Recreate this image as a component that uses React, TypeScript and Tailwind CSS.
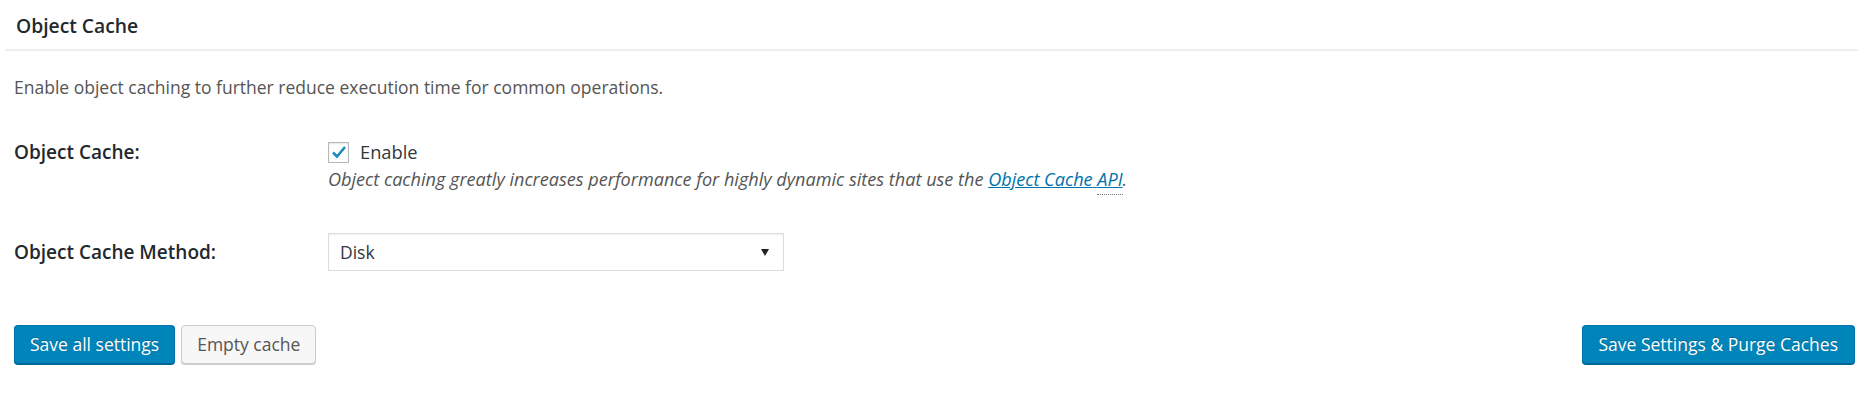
import React from 'react';

const font = { fontFamily: '"Open Sans", "Noto Sans", sans-serif' };

export default function App() {
  return (
    <div className="w-full h-[408px] bg-white text-[#23282d]" style={font}>
      {/* postbox header */}
      <div className="ml-[5px] mr-[14px] h-[51px] border-b-2 border-[#efefef] flex items-center pl-[11px] pt-[3px]">
        <h3 className="text-[19.3px] font-semibold leading-none">Object Cache</h3>
      </div>

      <div className="pl-[14px] pr-[17px]">
        <p className="mt-[24px] text-[17.5px] leading-[24px] text-[#555]">
          Enable object caching to further reduce execution time for common operations.
        </p>

        {/* settings rows */}
        <div className="mt-[41px] flex">
          <div className="w-[314px] shrink-0 text-[19px] leading-[24px] font-semibold">Object Cache:</div>
          <div>
            <label className="flex items-center h-[24px] text-[18.3px] text-[#32373c]">
              <span className="w-[21px] h-[21px] border border-[#b4b9be] bg-white shadow-[inset_0_1px_2px_rgba(0,0,0,0.1)] flex items-center justify-center mr-[11px]">
                <svg width="16" height="14" viewBox="0 0 16 14">
                  <path d="M2 7.5 L6 11.5 L14 2" fill="none" stroke="#1e8cbe" strokeWidth="2.6" />
                </svg>
              </span>
              Enable
            </label>
            <p className="mt-[3px] text-[18.1px] leading-[24px] italic text-[#555]">
              Object caching greatly increases performance for highly dynamic sites that use the{' '}
              <a className="text-[#0073aa] underline">
                Object Cache{' '}
                <abbr className="no-underline border-b border-dotted border-[#777] pb-[3px]" title="Application Programming Interface">
                  API
                </abbr>
              </a>
              .
            </p>
          </div>
        </div>

        <div className="mt-[42px] flex items-center">
          <div className="w-[314px] shrink-0 text-[19px] leading-[24px] font-semibold">Object Cache Method:</div>
          <div className="w-[456px] h-[38px] border border-[#dddddd] shadow-[inset_0_1px_2px_rgba(0,0,0,0.07)] flex items-center justify-between pl-[11px] pr-[14px] text-[17.5px] text-[#32373c]">
            <span>Disk</span>
            <svg width="8" height="7" viewBox="0 0 8 7">
              <polygon points="0,0 8,0 4,7" fill="#222" />
            </svg>
          </div>
        </div>

        {/* buttons */}
        <div className="mt-[54px] flex items-center justify-between">
          <div className="flex gap-[6px]">
            <button className="h-[39px] px-[15px] rounded-[4px] bg-[#0085ba] border border-[#0073aa] border-b-[#006799] shadow-[0_1px_0_#006799] text-white text-[17.5px] [text-shadow:0_-1px_1px_#006799]">
              Save all settings
            </button>
            <button className="h-[39px] px-[15px] rounded-[4px] bg-[#f7f7f7] border border-[#cccccc] shadow-[0_1px_0_#cccccc] text-[#555] text-[17.5px]">
              Empty cache
            </button>
          </div>
          <button className="h-[39px] px-[16px] rounded-[4px] bg-[#0085ba] border border-[#0073aa] border-b-[#006799] shadow-[0_1px_0_#006799] text-white text-[17.5px] [text-shadow:0_-1px_1px_#006799]">
            Save Settings &amp; Purge Caches
          </button>
        </div>
      </div>
    </div>
  );
}
